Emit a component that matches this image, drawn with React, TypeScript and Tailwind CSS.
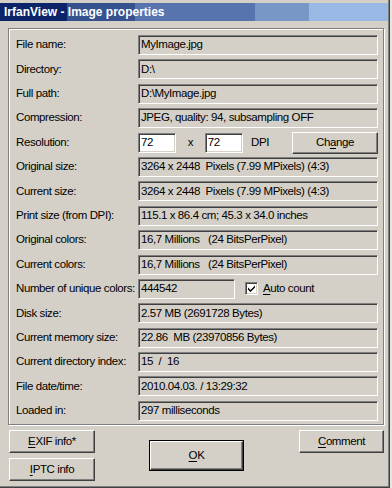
import React from "react";

const sunken =
  "border border-[#808080] border-r-white border-b-white shadow-[inset_1px_1px_0_#404040,inset_-1px_-1px_0_#d4d0c8]";
const raised =
  "border border-white border-r-[#404040] border-b-[#404040] shadow-[inset_-1px_-1px_0_#808080]";

function U({ children }: { children: React.ReactNode }) {
  return <span className="underline underline-offset-[2px] decoration-1">{children}</span>;
}

function Field({ children, w = "w-[240px]" }: { children?: React.ReactNode; w?: string }) {
  return (
    <div className={`${w} h-[20px] ${sunken} bg-[#d4d0c8] flex items-center pl-[2px] whitespace-pre`}>
      {children}
    </div>
  );
}

function Row({ label, children }: { label: string; children: React.ReactNode }) {
  return (
    <div className="flex items-center h-[20px]">
      <div className="w-[122px] shrink-0">{label}</div>
      {children}
    </div>
  );
}

const rows: [string, string][] = [
  ["File name:", "MyImage.jpg"],
  ["Directory:", "D:\\"],
  ["Full path:", "D:\\MyImage.jpg"],
  ["Compression:", "JPEG, quality: 94, subsampling OFF"],
];
const rows2: [string, string][] = [
  ["Original size:", "3264 x 2448  Pixels (7.99 MPixels) (4:3)"],
  ["Current size:", "3264 x 2448  Pixels (7.99 MPixels) (4:3)"],
  ["Print size (from DPI):", "115.1 x 86.4 cm; 45.3 x 34.0 inches"],
  ["Original colors:", "16,7 Millions   (24 BitsPerPixel)"],
  ["Current colors:", "16,7 Millions   (24 BitsPerPixel)"],
];
const rows3: [string, string][] = [
  ["Disk size:", "2.57 MB (2691728 Bytes)"],
  ["Current memory size:", "22.86  MB (23970856 Bytes)"],
  ["Current directory index:", "15  /  16"],
  ["File date/time:", "2010.04.03. / 13:29:32"],
  ["Loaded in:", "297 milliseconds"],
];

export default function App() {
  return (
    <div className="w-[392px] h-[488px] bg-[#e8e6e0] font-['Liberation_Sans',Arial,sans-serif] text-[11.5px] tracking-[-0.4px] text-black leading-none">
      <div className="w-[390px] h-[488px] bg-[#d4d0c8] flex flex-col border-r border-b border-[#404040] shadow-[inset_-1px_-1px_0_#808080] pt-[3px] relative">
        <div className="h-[18px] mr-[1px] flex items-center pl-[4px] bg-[linear-gradient(to_right,#0c2469_0px,#0c2469_67px,#35528f_67px,#35528f_135px,#5774ae_135px,#5774ae_255px,#7897c7_255px,#7897c7_309px,#99b9e4_309px)]">
          <span className="text-white font-bold text-[12px] tracking-[0px]">IrfanView - Image properties</span>
        </div>

        <div className="ml-[8px] mt-[7px] w-[376px] h-[397px] border border-[#808080] shadow-[inset_1px_1px_0_#fff,1px_1px_0_#fff] pl-[7px] pt-[6px] pr-[5px] flex flex-col gap-[4.4px]">
          {rows.map(([l, v]) => (
            <Row key={l} label={l}>
              <Field>{v}</Field>
            </Row>
          ))}
          <Row label="Resolution:">
            <div className={`w-[39px] h-[20px] ${sunken} bg-white flex items-center pl-[2px]`}>72</div>
            <div className="w-[29px] text-center">x</div>
            <div className={`w-[39px] h-[20px] ${sunken} bg-white flex items-center pl-[2px]`}>72</div>
            <div className="ml-[8px]">DPI</div>
            <div
              className={`ml-[23px] w-[86px] h-[22px] shrink-0 ${raised} flex items-center justify-center`}
            >
              Ch<U>a</U>nge
            </div>
          </Row>
          {rows2.map(([l, v], i) => (
            <Row key={l + i} label={l}>
              <Field>{v}</Field>
            </Row>
          ))}
          <Row label="Number of unique colors:">
            <Field w="w-[97px]">444542</Field>
            <div className={`ml-[10px] w-[13px] h-[13px] ${sunken} bg-white flex items-center justify-center`}>
              <svg width="9" height="9" viewBox="0 0 9 9">
                <path d="M1 3.5 L3.5 6 L8 1.5 V3.5 L3.5 8 L1 5.5 Z" fill="#000" />
              </svg>
            </div>
            <div className="ml-[5px]">
              <U>A</U>uto count
            </div>
          </Row>
          {rows3.map(([l, v]) => (
            <Row key={l} label={l}>
              <Field>{v}</Field>
            </Row>
          ))}
        </div>

        <div className="flex mt-[5px] ml-[9px]">
          <div className="flex flex-col gap-[5px] w-[86px]">
            <div className={`h-[23px] ${raised} flex items-center justify-center`}>
              <U>E</U>XIF info*
            </div>
            <div className={`h-[23px] ${raised} flex items-center justify-center`}>
              <U>I</U>PTC info
            </div>
          </div>
          <div className="ml-[54px] mt-[10px] w-[95px] h-[31px] border border-black">
            <div className={`w-full h-full ${raised} flex items-center justify-center`}>
              <U>O</U>K
            </div>
          </div>
          <div className={`ml-[55px] w-[85px] h-[23px] ${raised} flex items-center justify-center`}>
            <U>C</U>omment
          </div>
        </div>
      </div>
    </div>
  );
}
